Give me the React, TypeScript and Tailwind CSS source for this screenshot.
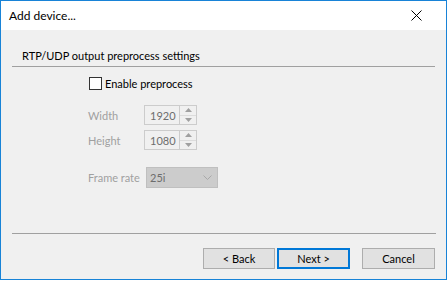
const font = { fontFamily: 'Lato, "Liberation Sans", sans-serif' };

const Spinner = ({ value }: { value: string }) => (
  <div className="flex h-[20px] w-[53px] border border-[#cccccc] bg-[#f0f0f0]">
    <div className="flex flex-1 items-center pl-[5px] text-[11px] text-[#6d6d6d]">{value}</div>
    <div className="flex w-[17px] flex-col border-l border-[#cccccc]">
      <div className="flex flex-1 items-center justify-center border-b border-[#dcdcdc]">
        <svg width="7" height="4" viewBox="0 0 7 4">
          <path d="M3.5 0 L7 4 L0 4 Z" fill="#a0a0a0" />
        </svg>
      </div>
      <div className="flex flex-1 items-center justify-center">
        <svg width="7" height="4" viewBox="0 0 7 4">
          <path d="M0 0 L7 0 L3.5 4 Z" fill="#a0a0a0" />
        </svg>
      </div>
    </div>
  </div>
);

const Button = ({ label, primary }: { label: string; primary?: boolean }) => (
  <button
    className={
      primary
        ? 'flex h-[21px] w-[73px] items-center justify-center border-2 border-[#0078d7] bg-[#e1e1e1] text-[11px] text-black'
        : 'flex h-[21px] w-[73px] items-center justify-center border border-[#adadad] bg-[#e1e1e1] text-[11px] text-black'
    }
  >
    {label}
  </button>
);

export default function App() {
  return (
    <div className="h-[281px] w-[448px] bg-white" style={font}>
      <div className="flex h-[280px] w-[447px] flex-col border border-[#1883d7] bg-[#f0f0f0]">
        <div className="flex h-[29px] items-center justify-between bg-white pl-[8px] pr-[24px]">
          <span className="text-[12px] text-black">Add device...</span>
          <svg width="11" height="11" viewBox="0 0 11 11">
            <path d="M0.5 0.5 L10.5 10.5 M10.5 0.5 L0.5 10.5" stroke="#000" strokeWidth="1" />
          </svg>
        </div>
        <div className="flex flex-1 flex-col px-[11px] text-[11px] leading-[15px]">
          <div className="mt-[18px] pl-[10px] text-black">RTP/UDP output preprocess settings</div>
          <div className="mt-[3px] h-px w-[423px] bg-[#a0a0a0]" />
          <div className="mt-[10px] flex h-[13px] items-center pl-[77px]">
            <div className="h-[13px] w-[13px] border border-[#333333] bg-white" />
            <span className="ml-[3px] text-black">Enable preprocess</span>
          </div>
          <div className="mt-[15px] grid grid-cols-[56px_auto] items-center gap-y-[5px] pl-[76px]">
            <span className="text-[#a0a0a0]">Width</span>
            <Spinner value="1920" />
            <span className="text-[#a0a0a0]">Height</span>
            <Spinner value="1080" />
          </div>
          <div className="mt-[17px] flex items-center pl-[76px]">
            <span className="w-[58px] text-[#a0a0a0]">Frame rate</span>
            <div className="flex h-[21px] w-[72px] items-center justify-between border border-[#bfbfbf] bg-[#cccccc] pl-[3px] pr-[5px]">
              <span className="text-[#6d6d6d]">25i</span>
              <svg width="9" height="5" viewBox="0 0 9 5">
                <path d="M0.5 0.5 L4.5 4.5 L8.5 0.5" stroke="#a8a8a8" fill="none" />
              </svg>
            </div>
          </div>
          <div className="mt-[45px] h-px w-[424px] bg-[#a0a0a0]" />
          <div className="mt-[14px] flex pl-[191px]">
            <Button label="< Back" />
            <div className="ml-[2px]">
              <Button label="Next >" primary />
            </div>
            <div className="ml-[12px]">
              <Button label="Cancel" />
            </div>
          </div>
        </div>
      </div>
    </div>
  );
}
